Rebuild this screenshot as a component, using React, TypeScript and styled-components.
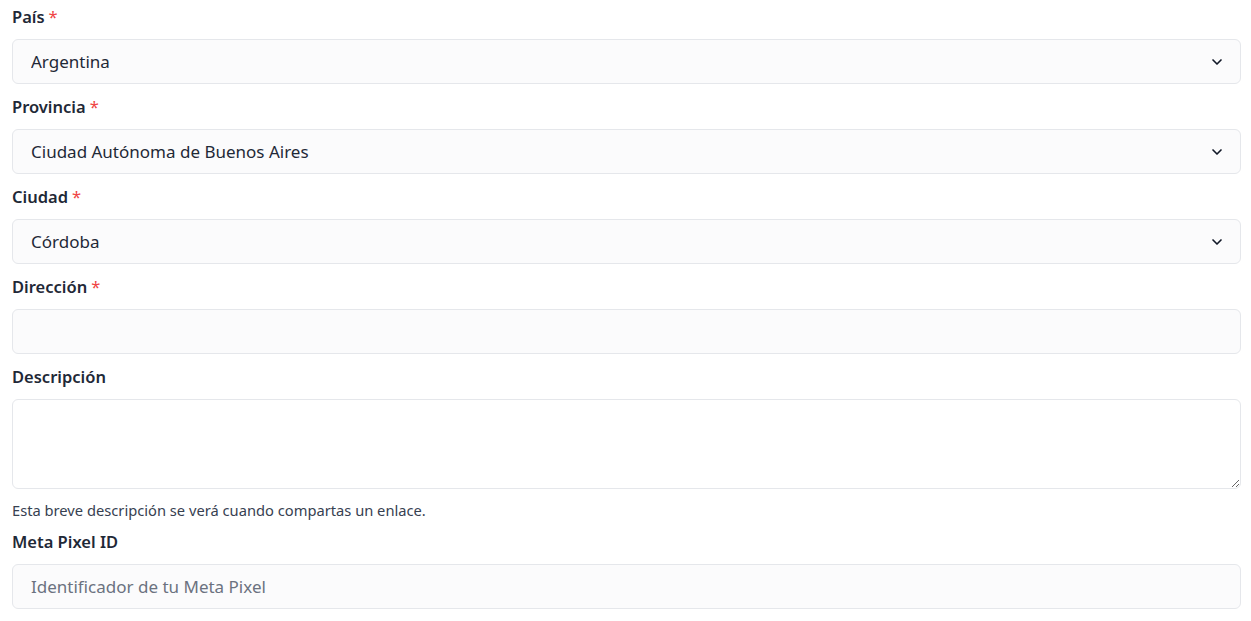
import React from "react";
import styled, { createGlobalStyle } from "styled-components";

const Global = createGlobalStyle`
  html, body { margin: 0; padding: 0; background: #ffffff; }
  body { font-family: "Noto Sans", "Open Sans", sans-serif; color: #111827; }
  * { box-sizing: border-box; }
`;

const Form = styled.form`
  display: flex;
  flex-direction: column;
  gap: 11px;
  padding: 5px 10px 0 12px;
`;

const Field = styled.div`
  display: flex;
  flex-direction: column;
`;

const Label = styled.label`
  font-size: 16.5px;
  font-weight: 600;
  line-height: 24px;
  color: #1f2937;
  margin-bottom: 10px;
`;

const Req = styled.span`
  color: #ef4444;
  font-weight: 400;
  margin-left: 4px;
`;

const SelectWrap = styled.div`
  position: relative;
`;

const fieldBase = `
  width: 100%;
  height: 45px;
  border: 1px solid #e5e7eb;
  border-radius: 6px;
  background: #fbfbfc;
  font-family: inherit;
  font-size: 17px;
  color: #1f2937;
  outline: none;
`;

const Select = styled.select`
  ${fieldBase}
  appearance: none;
  padding: 0 40px 0 18px;
`;

const Chevron = styled.svg`
  position: absolute;
  right: 16px;
  top: 50%;
  transform: translateY(-50%);
  pointer-events: none;
`;

const Input = styled.input`
  ${fieldBase}
  padding: 0 18px;
  &::placeholder { color: #6b7280; }
`;

const TextArea = styled.textarea`
  ${fieldBase}
  height: 90px;
  padding: 10px 18px;
  background: #ffffff;
  display: block;
`;

const Help = styled.p`
  margin: 11px 0 -1px;
  font-size: 14.7px;
  line-height: 20px;
  color: #374151;
`;

const Down = () => (
  <Chevron width="16" height="16" viewBox="0 0 24 24" fill="none" stroke="#111827" strokeWidth="2.5" strokeLinecap="round" strokeLinejoin="round">
    <path d="m6 9 6 6 6-6" />
  </Chevron>
);

const SelectField = ({ label, value, required }: { label: string; value: string; required?: boolean }) => (
  <Field>
    <Label>
      {label}
      {required && <Req>*</Req>}
    </Label>
    <SelectWrap>
      <Select defaultValue={value}>
        <option>{value}</option>
      </Select>
      <Down />
    </SelectWrap>
  </Field>
);

export default function App() {
  return (
    <>
      <Global />
      <Form>
        <SelectField label="País" value="Argentina" required />
        <SelectField label="Provincia" value="Ciudad Autónoma de Buenos Aires" required />
        <SelectField label="Ciudad" value="Córdoba" required />
        <Field>
          <Label>
            Dirección<Req>*</Req>
          </Label>
          <Input />
        </Field>
        <Field>
          <Label>Descripción</Label>
          <TextArea />
          <Help>Esta breve descripción se verá cuando compartas un enlace.</Help>
        </Field>
        <Field>
          <Label>Meta Pixel ID</Label>
          <Input placeholder="Identificador de tu Meta Pixel" />
        </Field>
      </Form>
    </>
  );
}
